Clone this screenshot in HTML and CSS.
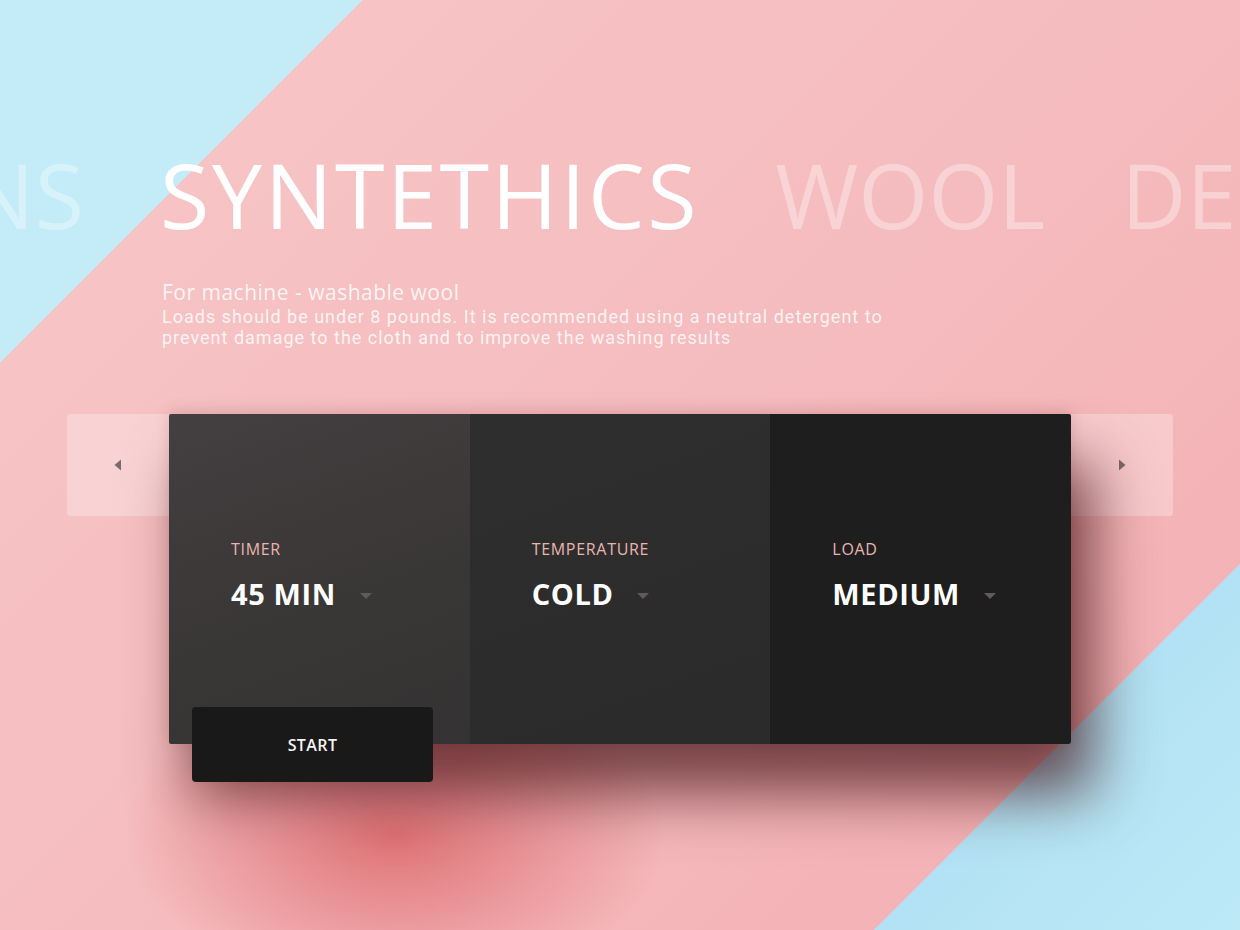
FILE: index.html
```html
<!DOCTYPE html>
<html lang="en">
<head>
<meta charset="utf-8">
<title>Washing programs</title>
<link rel="stylesheet" href="styles.css">
</head>
<body>
<div class="stage">
  <div class="tabs">
    <div class="word faded prev"><span>COTTONS</span></div>
    <div class="word active">SYNTETHICS</div>
    <div class="word faded">WOOL</div>
    <div class="word faded">DELICATES</div>
  </div>

  <div class="desc">
    <h2 class="desc-title">For machine - washable wool</h2>
    <p class="desc-text">Loads should be under 8 pounds. It is recommended using a neutral detergent to<br>prevent damage to the cloth and to improve the washing results</p>
  </div>

  <div class="controls">
    <button class="arrow arrow-left" aria-label="Previous">
      <svg width="8" height="12" viewBox="0 0 8 12"><path d="M7 0.5 L0.5 6 L7 11.5 Z" fill="#7a6a6b"/></svg>
    </button>
    <div class="card">
      <div class="panel panel-1">
        <div class="label">TIMER</div>
        <div class="value">45 MIN <span class="caret"></span></div>
      </div>
      <div class="panel panel-2">
        <div class="label">TEMPERATURE</div>
        <div class="value">COLD <span class="caret"></span></div>
      </div>
      <div class="panel panel-3">
        <div class="label">LOAD</div>
        <div class="value">MEDIUM <span class="caret"></span></div>
      </div>
    </div>
    <button class="arrow arrow-right" aria-label="Next">
      <svg width="8" height="12" viewBox="0 0 8 12"><path d="M1 0.5 L7.5 6 L1 11.5 Z" fill="#7a6a6b"/></svg>
    </button>
  </div>

  <button class="start">START</button>
</div>
</body>
</html>
```

FILE: styles.css
```css
* { box-sizing: border-box; }

html, body {
  margin: 0;
  padding: 0;
}

body {
  font-family: "Open Sans", "Liberation Sans", sans-serif;
  background: #f6bfc1;
}

.stage {
  width: 1240px;
  height: 930px;
  overflow: hidden;
  padding-top: 149px;
  background:
    radial-gradient(ellipse 270px 160px at 395px 835px, rgba(214, 84, 88, 0.7), rgba(214, 84, 88, 0.32) 55%, rgba(214, 84, 88, 0) 100%),
    linear-gradient(135deg,
      #c4ebf8 0px, #c4ebf8 256px,
      #f7c3c5 257px, #f5bcbf 800px, #f4b3b6 1275px,
      #b2e2f3 1276px, #bde9f7 1534px);
}

/* ---------- Tabs ---------- */
.tabs {
  display: flex;
  gap: 76px;
  white-space: nowrap;
  font-size: 90px;
  line-height: 90px;
  font-weight: 500;
  letter-spacing: 2.5px;
  color: #ffffff;
}

.word { flex: none; }

.word.prev {
  width: 84px;
  display: flex;
  justify-content: flex-end;
}

.word.faded {
  color: rgba(255, 255, 255, 0.35);
  letter-spacing: 0;
}

/* ---------- Description ---------- */
.desc {
  margin: 40px 0 0 162px;
  color: rgba(255, 255, 255, 0.82);
}

.desc-title {
  margin: 0;
  font-size: 21px;
  line-height: 26px;
  font-weight: 400;
  letter-spacing: 0.5px;
}

.desc-text {
  margin: 1px 0 0;
  font-family: Roboto, "Open Sans", sans-serif;
  font-size: 18px;
  line-height: 21px;
  letter-spacing: 1px;
}

/* ---------- Controls ---------- */
.controls {
  display: flex;
  align-items: flex-start;
  margin: 66px 0 0 67px;
}

.arrow {
  width: 102px;
  height: 102px;
  border: 0;
  padding: 0;
  background: rgba(255, 255, 255, 0.28);
  display: flex;
  align-items: center;
  justify-content: center;
}

.arrow-left { border-radius: 3px 0 0 3px; }
.arrow-right { border-radius: 0 3px 3px 0; }

.card {
  position: relative;
  z-index: 1;
  display: flex;
  width: 902px;
  height: 330px;
  border-radius: 2px;
  box-shadow:
    22px 50px 60px rgba(65, 15, 20, 0.7),
    0 -3px 14px rgba(140, 60, 60, 0.18);
}

.panel {
  flex: 1;
  padding: 125px 0 0 62px;
}

.panel-1 {
  background: linear-gradient(160deg, #443f40 0%, #393636 60%, #343232 100%);
  border-radius: 2px 0 0 2px;
}

.panel-2 {
  background: linear-gradient(160deg, #2f2e2e 0%, #2c2b2b 100%);
}

.panel-3 {
  background: #1f1e1f;
  border-radius: 0 2px 2px 0;
}

.label {
  font-size: 16px;
  line-height: 20px;
  color: #e8b6b1;
  letter-spacing: 0.7px;
}

.value {
  margin-top: 18px;
  display: flex;
  align-items: center;
  gap: 24px;
  font-size: 29px;
  line-height: 34px;
  font-weight: 700;
  color: #ffffff;
  letter-spacing: 0.6px;
}

.caret {
  width: 0;
  height: 0;
  border-left: 6px solid transparent;
  border-right: 6px solid transparent;
  border-top: 6px solid #5f5b5b;
  margin-top: 3px;
}

/* ---------- Start ---------- */
.start {
  position: relative;
  z-index: 2;
  display: block;
  margin: -37px 0 0 192px;
  width: 241px;
  height: 75px;
  border: 0;
  border-radius: 4px;
  background: #1a1919;
  color: #f4f4f4;
  font-family: "Open Sans", "Liberation Sans", sans-serif;
  font-size: 16px;
  font-weight: 600;
  letter-spacing: 0.4px;
}
```
